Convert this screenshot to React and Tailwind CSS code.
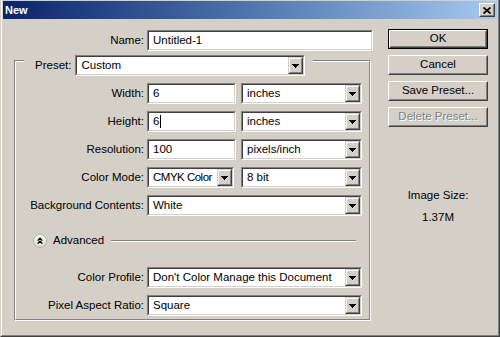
import React from "react";

const Tri = () => (
  <svg width="7" height="4" viewBox="0 0 7 4" shapeRendering="crispEdges">
    <path d="M0 0h7v1h-1v1h-1v1h-1v1h-1v-1h-1v-1h-1v-1h-1z" fill="#000" />
  </svg>
);

function DropBtn() {
  return (
    <div className="w-[15px] h-full shrink-0 bg-[#d4d0c8] border border-t-[#d4d0c8] border-l-[#d4d0c8] border-r-[#404040] border-b-[#404040]">
      <div className="w-full h-full border border-t-white border-l-white border-r-[#808080] border-b-[#808080] flex items-center justify-center">
        <Tri />
      </div>
    </div>
  );
}

function Field({ w, children, drop }) {
  return (
    <div className={`${w} h-[21px] shrink-0 border border-t-[#808080] border-l-[#808080] border-r-white border-b-white`}>
      <div className="h-full bg-white border border-t-[#404040] border-l-[#404040] border-r-[#d4d0c8] border-b-[#d4d0c8] flex items-center">
        <span className="flex-1 pl-[4px] whitespace-nowrap overflow-hidden flex items-center leading-none">
          {children}
        </span>
        {drop && <DropBtn />}
      </div>
    </div>
  );
}

function Row({ label, lw, children }) {
  return (
    <div className="flex items-center h-[21px]">
      <span className={`${lw} shrink-0 text-right pr-[3px] whitespace-nowrap`}>{label}</span>
      {children}
    </div>
  );
}

function Btn({ children, def, disabled }) {
  const body = (
    <div className="h-full border border-t-white border-l-white border-r-[#404040] border-b-[#404040]">
      <div className="h-full border border-t-[#d4d0c8] border-l-[#d4d0c8] border-r-[#808080] border-b-[#808080] flex items-center justify-center">
        <span className={disabled ? "text-[#808080] [text-shadow:1px_1px_0_#fff]" : ""}>{children}</span>
      </div>
    </div>
  );
  return (
    <div className={`w-[100px] h-[20px] ${def ? "border border-black" : ""}`}>{body}</div>
  );
}

export default function App() {
  return (
    <div className="w-[500px] h-[337px] bg-[#d4d0c8] text-black text-[11.5px] font-['Liberation_Sans',Arial,sans-serif] border-r border-b border-l border-r-[#404040] border-b-[#404040] border-l-[#d4d0c8] overflow-hidden">
      <div className="h-full border-r border-b border-l border-r-[#808080] border-b-[#808080] border-l-white px-px pt-px flex flex-col">
        {/* Title bar */}
        <div className="h-[18px] shrink-0 bg-linear-to-r from-[#0a246a] to-[#a6caf0] flex items-center justify-between pl-[2px] pr-[2px]">
          <span className="text-white font-bold text-[11px]">New</span>
          <div className="w-[16px] h-[14px] border border-t-white border-l-white border-r-[#404040] border-b-[#404040] bg-[#d4d0c8]">
            <div className="w-full h-full border border-t-[#d4d0c8] border-l-[#d4d0c8] border-r-[#808080] border-b-[#808080] flex items-center justify-center">
              <svg width="8" height="7" viewBox="0 0 8 7">
                <path d="M0.5 0.5L7.5 6.5M7.5 0.5L0.5 6.5" stroke="#000" strokeWidth="1.7" />
              </svg>
            </div>
          </div>
        </div>

        <div className="flex flex-1">
          {/* Left column */}
          <div className="w-[368px] shrink-0">
            <div className="mt-[11px]">
              <Row label="Name:" lw="w-[144px]">
                <Field w="w-[226px]">Untitled-1</Field>
              </Row>
            </div>

            {/* Group box */}
            <div className="mt-[9px] ml-[11px] w-[357px] border border-t-[#808080] border-l-[#808080] border-r-white border-b-white">
              <div className="border border-t-white border-l-white border-r-[#808080] border-b-[#808080] flex flex-col gap-[7px] pb-[3px]">
                <div className="-mt-[7px] ml-[8px] self-start flex items-center bg-[#d4d0c8] pl-[11px] pr-[8px]">
                  <span className="pr-[4px]">Preset:</span>
                  <Field w="w-[230px]" drop>Custom</Field>
                </div>
                <Row label="Width:" lw="w-[131px]">
                  <Field w="w-[89px]">6</Field>
                  <div className="ml-[5px]">
                    <Field w="w-[121px]" drop>inches</Field>
                  </div>
                </Row>
                <Row label="Height:" lw="w-[131px]">
                  <Field w="w-[89px]">
                    6<span className="inline-block w-px h-[13px] bg-black ml-px" />
                  </Field>
                  <div className="ml-[5px]">
                    <Field w="w-[121px]" drop>inches</Field>
                  </div>
                </Row>
                <Row label="Resolution:" lw="w-[131px]">
                  <Field w="w-[89px]">100</Field>
                  <div className="ml-[5px]">
                    <Field w="w-[121px]" drop>pixels/inch</Field>
                  </div>
                </Row>
                <Row label="Color Mode:" lw="w-[131px]">
                  <Field w="w-[87px]" drop>
                    <span className="tracking-[-0.5px]">CMYK Color</span>
                  </Field>
                  <div className="ml-[7px]">
                    <Field w="w-[121px]" drop>8 bit</Field>
                  </div>
                </Row>
                <Row label="Background Contents:" lw="w-[131px]">
                  <Field w="w-[215px]" drop>White</Field>
                </Row>

                {/* Advanced */}
                <div className="mt-[11px] h-[14px] flex items-center pl-[17px] pr-[13px]">
                  <svg width="14" height="14" viewBox="0 0 14 14" className="shrink-0">
                    <defs>
                      <linearGradient id="adv" x1="0" y1="0" x2="0" y2="1">
                        <stop offset="0" stopColor="#ffffff" />
                        <stop offset="1" stopColor="#d8d6d0" />
                      </linearGradient>
                    </defs>
                    <circle cx="7" cy="7" r="6.5" fill="url(#adv)" stroke="#b4b0a8" />
                    <path d="M4.6 6.6L7 4.2L9.4 6.6M4.6 9.6L7 7.2L9.4 9.6" stroke="#000" strokeWidth="1.3" fill="none" />
                  </svg>
                  <span className="ml-[6px] whitespace-nowrap">Advanced</span>
                  <div className="ml-[7px] flex-1 h-[2px] border-t border-b border-t-[#808080] border-b-white" />
                </div>

                <div className="mt-[12px]">
                  <Row label="Color Profile:" lw="w-[131px]">
                    <Field w="w-[215px]" drop>Don't Color Manage this Document</Field>
                  </Row>
                </div>
                <Row label="Pixel Aspect Ratio:" lw="w-[131px]">
                  <Field w="w-[215px]" drop>Square</Field>
                </Row>
              </div>
            </div>
          </div>

          {/* Right column */}
          <div className="ml-auto mr-[9px] mt-[10px] flex flex-col items-center">
            <div className="flex flex-col gap-[6px]">
              <Btn def>OK</Btn>
              <Btn>Cancel</Btn>
              <Btn>Save Preset...</Btn>
              <Btn disabled>Delete Preset...</Btn>
            </div>
            <div className="mt-[61px] leading-[14px] text-center">Image Size:</div>
            <div className="mt-[8px] leading-[14px] text-center">1.37M</div>
          </div>
        </div>
      </div>
    </div>
  );
}
